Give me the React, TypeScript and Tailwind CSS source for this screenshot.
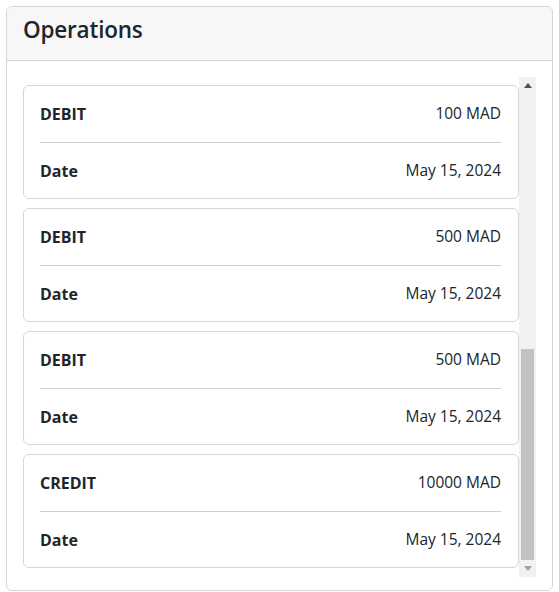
import React from "react";

const ops = [
  { type: "DEBIT", amount: "100 MAD", date: "May 15, 2024" },
  { type: "DEBIT", amount: "500 MAD", date: "May 15, 2024" },
  { type: "DEBIT", amount: "500 MAD", date: "May 15, 2024" },
  { type: "CREDIT", amount: "10000 MAD", date: "May 15, 2024" },
];

function OpCard({ type, amount, date }: { type: string; amount: string; date: string }) {
  return (
    <div className="rounded-md border border-[#d6d6d6] bg-white pl-4 pr-[17px]">
      <div className="flex h-[56px] items-center justify-between">
        <span className="font-bold">{type}</span>
        <span className="text-[15.5px]">{amount}</span>
      </div>
      <div className="h-px bg-[#cfcfcf]" />
      <div className="flex h-[55px] items-center justify-between">
        <span className="font-bold">Date</span>
        <span className="text-[15.5px]">{date}</span>
      </div>
    </div>
  );
}

export default function App() {
  return (
    <div
      className="min-h-[592px] bg-white p-[6px] text-[16px] text-[#212529]"
      style={{ fontFamily: '"Open Sans", "Noto Sans", sans-serif' }}
    >
      <div className="overflow-hidden rounded-md border border-[#d6d6d6] bg-white">
        <div className="flex h-[54px] items-center border-b border-[#d6d6d6] bg-[#f7f7f7] px-4 pb-[6px]">
          <h3 className="text-[22.5px] font-semibold leading-none tracking-[-0.2px]">Operations</h3>
        </div>
        <div className="px-4 pt-4 pb-[13px]">
          <div className="flex h-[500px]">
            <div className="flex flex-1 flex-col justify-end gap-[9px] overflow-hidden pb-[9px]">
              {ops.map((o, i) => (
                <OpCard key={i} {...o} />
              ))}
            </div>
            <div className="flex w-[17px] flex-col bg-[#f1f1f1]">
              <div className="flex h-[17px] items-center justify-center">
                <svg width="8" height="5" viewBox="0 0 8 5">
                  <path d="M0 5 L4 0 L8 5 Z" fill="#505050" />
                </svg>
              </div>
              <div className="flex flex-1 flex-col justify-end px-[2px]">
                <div className="h-[211px] bg-[#c1c1c1]" />
              </div>
              <div className="flex h-[17px] items-center justify-center">
                <svg width="8" height="5" viewBox="0 0 8 5">
                  <path d="M0 0 L8 0 L4 5 Z" fill="#a3a3a3" />
                </svg>
              </div>
            </div>
          </div>
        </div>
      </div>
    </div>
  );
}
